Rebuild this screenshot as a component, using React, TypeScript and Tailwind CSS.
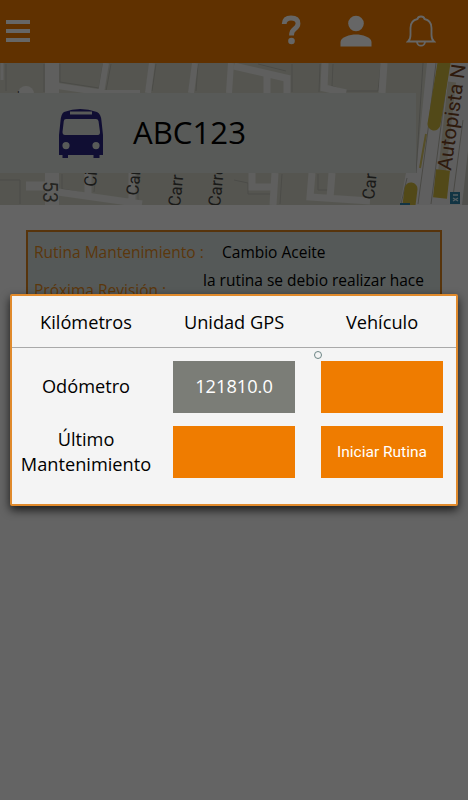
import type { ReactNode } from 'react';

const columns = ['Kilómetros', 'Unidad GPS', 'Vehículo'];

function StreetMap() {
  return (
    <svg className="block h-full w-full" viewBox="0 63 468 142" preserveAspectRatio="none">
      <rect x="0" y="63" width="468" height="142" fill="#d4d5c9" />
      <g stroke="#bdbdb3" strokeWidth="1" fill="none">
        <path d="M60 64V82L99 88L103 64M111 64L106 91M146 91L150 64M156 64L152 91M189 91L193 64M198 64L196 91M6 64V91M44 64V92" />
        <path d="M258 64L286 71M292 64V92M320 64L319 92M333 64L332 86L346 91H378L381 64" />
        <path d="M234 180L248 183V194H270M282 174L280 204M318 174V190H328M62 174V189L84 193M94 192L96 174M138 200V174M0 180H20V204" />
      </g>
      <g stroke="#eeeeea" fill="none" strokeWidth="6">
        <path d="M52 63V205" strokeWidth="14" />
        <path d="M2 63V80" strokeWidth="3" />
        <path d="M58 86L104 93H140M106 63L101 93M152 63L148 93M195 63L191 93M231 63L229 93" />
        <path d="M234 66L290 79M267 76V93M287 77V93M325 63L324 88L346 93M384 63L382 93" strokeWidth="7" />
        <path d="M26 186H52" strokeWidth="9" />
        <path d="M58 192L142 204M88 173V196M132 173V204" strokeWidth="7" />
        <path d="M252 173V187H274M275 173L273 205M312 173L310 197L370 201M332 173L330 198" strokeWidth="7" />
      </g>
      <circle cx="26" cy="94" r="8" fill="#f1f1ee" />
      <path d="M427 63H468V205H400L406 173H416Z" fill="#eeeeee" />
      <path d="M423 63L416 173M401 204L407 178" stroke="#b5b5ad" fill="none" />
      <path d="M436 63L428 130L418 204M449 63L435 173L431 204M463 120L452 204" stroke="#b8b6ab" fill="none" />
      <path d="M444 63L434 124" stroke="#cdb63c" strokeWidth="13" strokeLinecap="round" />
      <path d="M452 82L442 172" stroke="#d5d0b8" strokeWidth="8" />
      <path d="M426 134L420 168" stroke="#d5c263" strokeWidth="2" />
      <path d="M411 189L409 205" stroke="#cdb63c" strokeWidth="13" strokeLinecap="round" />
      <path d="M443 170L440 198" stroke="#cdb63c" strokeWidth="14" />
      <path d="M468 150L462 205H468Z" fill="#c9c9c0" />
      <rect x="450" y="192" width="10" height="12" fill="#2d83a8" />
      <path d="M453 195H458M453 198L458 201M453 201L458 198" stroke="#d8eef5" strokeWidth="1.3" />
      <rect x="400" y="203" width="10" height="2" fill="#2d83a8" />
      <g fontFamily="'Roboto', 'Liberation Sans', sans-serif" fontSize="17" fontWeight="400" fill="#42423e">
        <text transform="translate(43 181) rotate(90)" fontSize="19.5" fill="#5c5c55">53</text>
        <text transform="translate(96 187) rotate(-86)">Ci</text>
        <text transform="translate(138 196) rotate(-84)">Car</text>
        <text transform="translate(180 207) rotate(-84)">Carr</text>
        <text transform="translate(220 207) rotate(-84)">Carre</text>
        <text transform="translate(374 200) rotate(-84)">Car</text>
        <text x="1" y="99" fontSize="10">an. I</text>
        <text transform="translate(451 171) rotate(-82)" fontSize="20" textLength="107" lengthAdjust="spacingAndGlyphs" fill="#74421f">Autopista N</text>
      </g>
    </svg>
  );
}

function BusIcon() {
  return (
    <svg className="h-[50px] w-[46px]" viewBox="0 0 46 50">
      <path
        fillRule="evenodd"
        fill="#2a2380"
        d="M6 4Q22 -2 39 4Q43 6 43.500 13L45 27V47H41.500V50H35.500V47H10V50H4.500V47H1V27L2.500 13Q3 6 6 4ZM12 3.500V6.500H34V3.500ZM8 11Q6 11 5.800 13L4.500 24Q4.500 27 7 27H40Q42 27 42 24L40.500 13Q40 11 38 11ZM8 34A3.600 3.600 0 1 0 8 41.200A3.600 3.600 0 1 0 8 34ZM38 34A3.600 3.600 0 1 0 38 41.200A3.600 3.600 0 1 0 38 34Z"
      />
    </svg>
  );
}

function Header() {
  return (
    <header className="flex h-[63px] items-start bg-[#ef7c00]">
      <div className="ml-1.5 mt-5 flex flex-col gap-[5px]">
        <span className="h-1 w-6 bg-white" />
        <span className="h-1 w-6 bg-white" />
        <span className="h-1 w-6 bg-white" />
      </div>
      <svg className="ml-auto mt-[15px] h-[30px] w-5" viewBox="0 0 20 30">
        <path d="M3.200 9Q3.500 3 10 3Q17 3 17 8.500Q17 11.500 13.500 14Q10.500 16.200 10.500 20.500" fill="none" stroke="#fff" strokeWidth="4.800" />
        <circle cx="10.500" cy="26" r="3.300" fill="#fff" />
      </svg>
      <svg className="ml-[39px] mt-[15px] h-8 w-8" viewBox="0 0 32 32" fill="#fff">
        <circle cx="16" cy="8.500" r="7.800" />
        <path d="M0.500 31.500V27C0.500 22 10 19.500 16 19.500S31.500 22 31.500 27V31.500Z" />
      </svg>
      <svg className="ml-[34px] mr-8 mt-[15px] h-8 w-[30px]" viewBox="0 0 30 32" fill="none" stroke="#fff" strokeWidth="1.800">
        <path d="M2 26.500Q4.500 24.500 4.500 20V13Q4.500 5.500 11.500 4Q12 1.500 15 1.500T18.500 4Q25.500 5.500 25.500 13V20Q25.500 24.500 28 26.500Z" />
        <path d="M11 27Q11.500 30.700 15 30.700T19 27" />
      </svg>
    </header>
  );
}

function Cell({ children, className }: { children?: ReactNode; className: string }) {
  return <div className={`flex h-[52px] w-[122px] items-center justify-center ${className}`}>{children}</div>;
}

function OdometerDialog() {
  return (
    <div
      role="dialog"
      className="absolute left-[10px] top-[294px] h-[212px] w-[448px] rounded-[2px] border-2 border-[#e08a2c] bg-[#f4f4f4] text-[18.2px] text-black shadow-[0_4px_10px_rgba(0,0,0,0.75)]"
    >
      <div className="grid h-[52px] grid-cols-3 items-center border-b border-[#a9a9a9] pt-0.5 text-center">
        {columns.map((label) => (
          <div key={label}>{label}</div>
        ))}
      </div>
      <div className="mt-[13px] grid grid-cols-3 items-center justify-items-center gap-y-[13px]">
        <div>Odómetro</div>
        <Cell className="bg-[#7b7d77] text-white">121810.0</Cell>
        <Cell className="bg-[#ef7c00]" />
        <div className="text-center leading-[25px]">Último<br />Mantenimiento</div>
        <Cell className="bg-[#ef7c00]" />
        <Cell className="bg-[#ef7c00] pt-0.5 font-['Roboto',sans-serif] text-[15.5px] text-white">Iniciar Rutina</Cell>
      </div>
      <span className="absolute left-[302px] top-[55px] h-2 w-2 rounded-full border border-[#6c8585]" />
    </div>
  );
}

export default function App() {
  return (
    <div className="relative h-[800px] w-[468px] overflow-hidden bg-[#fafafa] font-['Open_Sans',sans-serif]">
      <Header />
      <section className="relative h-[142px]">
        <StreetMap />
        <div className="absolute left-0 top-[30px] flex h-20 w-[416px] items-center bg-[#dde1db] pl-[58px]">
          <BusIcon />
          <h1 className="ml-[29px] text-[31.2px] leading-none text-black">ABC123</h1>
        </div>
      </section>
      <section className="mx-[26px] mt-[25px] h-[110px] border-2 border-[#d9821f] bg-[#d4dfdc] text-[15.5px] leading-6 text-black">
        <div className="flex pl-1.5 pt-2">
          <span className="w-[188px] text-[#e38a1c]">Rutina Mantenimiento :</span>
          <span>Cambio Aceite</span>
        </div>
        <div className="flex pl-1.5 pt-1">
          <span className="w-[169px] pt-2.5 text-[#e38a1c]">Próxima Revisión :</span>
          <span className="whitespace-nowrap">la rutina se debio realizar hace</span>
        </div>
      </section>
      <div className="absolute inset-0 bg-black/60" />
      <OdometerDialog />
    </div>
  );
}
